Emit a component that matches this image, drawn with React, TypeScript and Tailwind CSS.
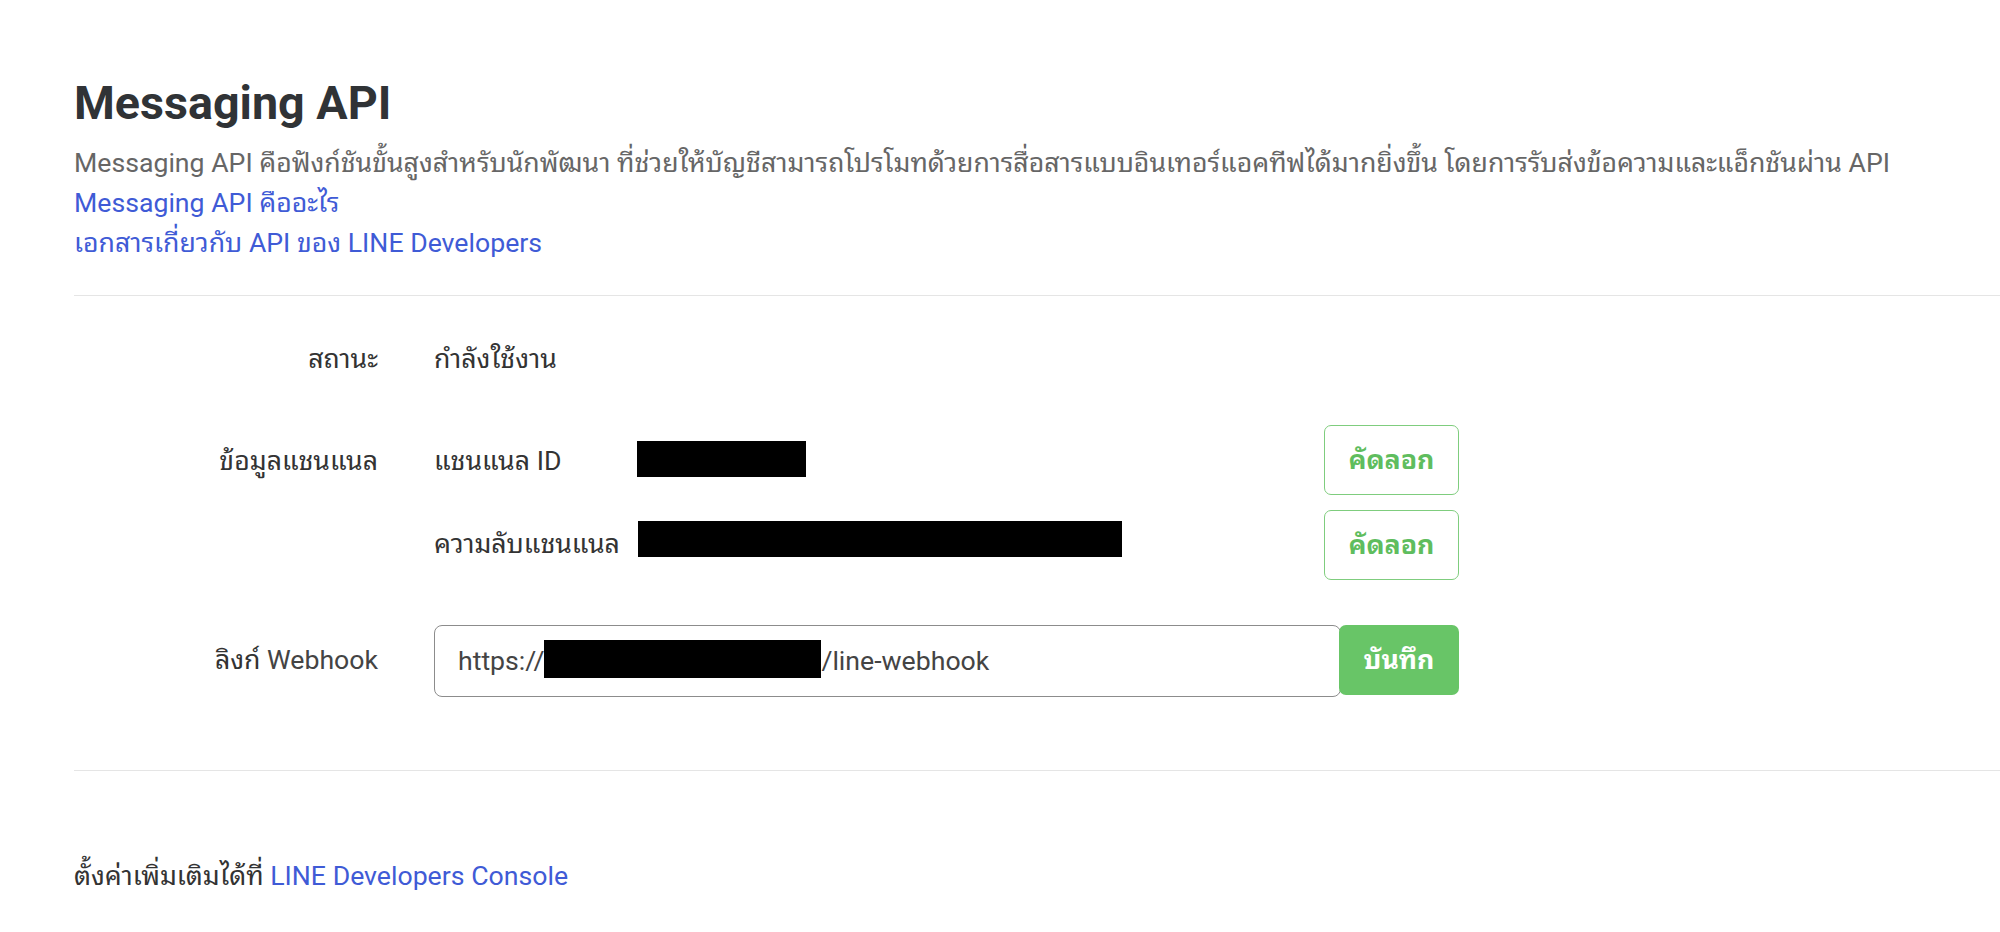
import React from "react";

function CopyButton() {
  return (
    <button className="w-[135px] h-[70px] shrink-0 rounded-[7px] border border-[#7fcd7e] bg-white text-[#5fbd5e] font-bold text-[26.67px] leading-[40px]">
      คัดลอก
    </button>
  );
}

export default function App() {
  return (
    <div className="min-h-[932px] w-full bg-white text-[#333] text-[26.67px] leading-[40px] [font-family:Roboto,'Noto_Sans_Thai_Looped','Leelawadee_UI',Loma,Garuda,'Noto_Sans_Thai',Tahoma,sans-serif]">
      <div className="pl-[74px] pt-[75px]">
        <h1 className="text-[46.67px] leading-[56px] font-bold text-[#303336]">Messaging API</h1>
        <p className="mt-[12px] text-[#666] whitespace-nowrap">
          Messaging API คือฟังก์ชันขั้นสูงสำหรับนักพัฒนา ที่ช่วยให้บัญชีสามารถโปรโมทด้วยการสื่อสารแบบอินเทอร์แอคทีฟได้มากยิ่งขึ้น โดยการรับส่งข้อความและแอ็กชันผ่าน API
        </p>
        <div>
          <a className="text-[#3f5bd6]">Messaging API คืออะไร</a>
        </div>
        <div>
          <a className="text-[#3f5bd6]">เอกสารเกี่ยวกับ API ของ LINE Developers</a>
        </div>
        <div className="mt-[32px] h-px bg-[#e5e5e5]" />

        {/* Status */}
        <div className="mt-[43px] flex">
          <div className="w-[304px] text-right shrink-0">สถานะ</div>
          <div className="ml-[56px]">กำลังใช้งาน</div>
        </div>

        {/* Channel info */}
        <div className="mt-[46px] flex items-start">
          <div className="w-[304px] text-right shrink-0 mt-[16px]">ข้อมูลแชนแนล</div>
          <div className="ml-[56px] w-[1025px] flex flex-col gap-[15px]">
            <div className="flex items-start">
              <div className="w-[203px] shrink-0 mt-[16px]">แชนแนล ID</div>
              <div className="mt-[16px] w-[169px] h-[36px] bg-black" />
              <div className="flex-1" />
              <CopyButton />
            </div>
            <div className="flex items-start">
              <div className="w-[204px] shrink-0 mt-[14px]">ความลับแชนแนล</div>
              <div className="mt-[11px] w-[484px] h-[36px] bg-black" />
              <div className="flex-1" />
              <CopyButton />
            </div>
          </div>
        </div>

        {/* Webhook */}
        <div className="mt-[45px] flex items-start">
          <div className="w-[304px] text-right shrink-0 mt-[15px]">
            ลิงก์ <span className="text-[#444]">Webhook</span>
          </div>
          <div className="ml-[56px] w-[1025px] flex items-start">
            <div className="flex-1 h-[72px] rounded-[8px] border border-[#8c8c8c] flex items-center pl-[23px] text-[#444] bg-white">
              <span>https://</span>
              <div className="self-start mt-[14px] w-[277px] h-[38px] bg-black" />
              <span>/line-webhook</span>
            </div>
            <button className="-ml-[2px] relative w-[120px] h-[70px] shrink-0 rounded-[7px] bg-[#68c567] text-white font-bold text-[26.67px] leading-[40px]">
              บันทึก
            </button>
          </div>
        </div>

        <div className="mt-[73px] h-px bg-[#e5e5e5]" />

        <div className="mt-[85px]">
          ตั้งค่าเพิ่มเติมได้ที่ <a className="text-[#3f5bd6]">LINE Developers Console</a>
        </div>
      </div>
    </div>
  );
}
